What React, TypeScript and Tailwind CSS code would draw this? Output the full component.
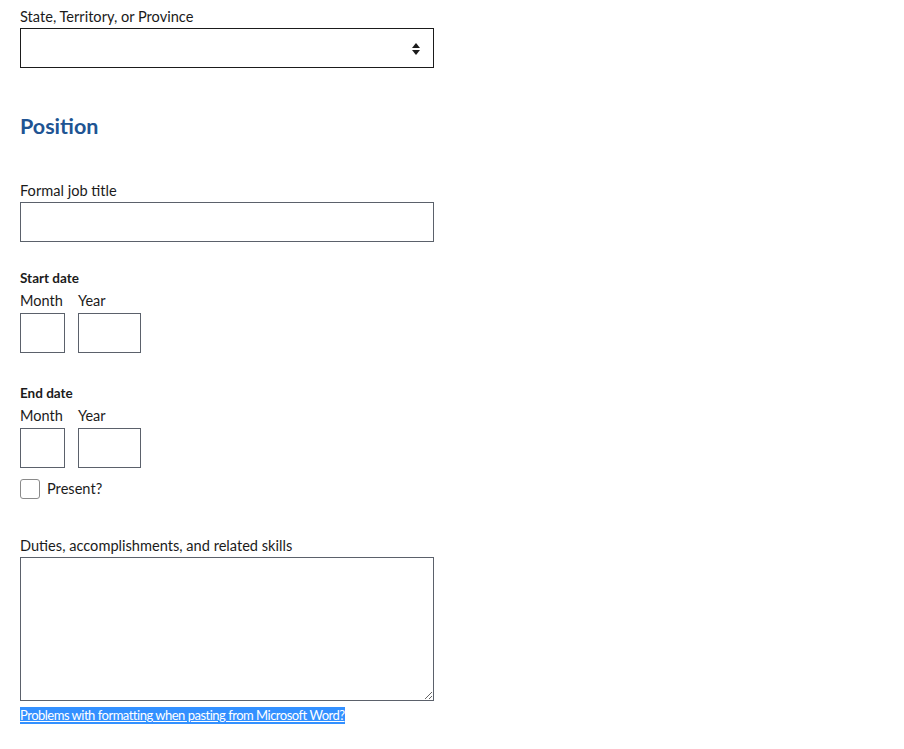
import React from "react";

const font = { fontFamily: '"Lato", "Open Sans", sans-serif' };

function SelectArrows() {
  return (
    <svg width="10" height="14" viewBox="0 0 10 14" className="absolute right-[12px] top-[13px]">
      <path d="M5 1 L9 6 H1 Z" fill="#1b1b1b" />
      <path d="M1 8 H9 L5 13 Z" fill="#1b1b1b" />
    </svg>
  );
}

function DateGroup({ title, top }: { title: string; top: string }) {
  return (
    <div className={top}>
      <div className="text-[13.5px] font-bold leading-[18px] text-[#1b1b1b]">{title}</div>
      <div className="mt-[4px] flex gap-[13px]">
        <div className="flex flex-col">
          <span className="text-[14.5px] leading-[20px] text-[#1b1b1b]">Month</span>
          <input className="mt-[2px] h-[40px] w-[45px] border border-[#5b616b] outline-none" />
        </div>
        <div className="flex flex-col">
          <span className="text-[14.5px] leading-[20px] text-[#1b1b1b]">Year</span>
          <input className="mt-[2px] h-[40px] w-[63px] border border-[#5b616b] outline-none" />
        </div>
      </div>
    </div>
  );
}

export default function App() {
  return (
    <div className="min-h-screen bg-white pl-[20px] pt-[7px]" style={font}>
      <div className="flex w-[414px] flex-col">
        <label className="text-[14.6px] leading-[20px] text-[#1b1b1b]">State, Territory, or Province</label>
        <div className="relative mt-[1px] h-[40px] w-full border border-[#1b1b1b]">
          <SelectArrows />
        </div>

        <h2 className="mt-[44px] text-[21.5px] font-bold leading-[28px] text-[#205493]">Position</h2>

        <label className="mt-[41px] text-[14.6px] leading-[20px] text-[#1b1b1b]">Formal job title</label>
        <input className="mt-[1px] h-[40px] w-full border border-[#5b616b] outline-none" />

        <DateGroup title="Start date" top="mt-[27px]" />
        <DateGroup title="End date" top="mt-[31px]" />

        <label className="mt-[11px] flex items-center gap-[7px]">
          <span className="h-[20px] w-[20px] rounded-[3px] border border-[#8a8a8a] bg-white" />
          <span className="text-[14.6px] leading-[20px] text-[#1b1b1b]">Present?</span>
        </label>

        <label className="mt-[37px] text-[14.6px] leading-[20px] text-[#1b1b1b]">
          Duties, accomplishments, and related skills
        </label>
        <textarea className="mt-[1px] block h-[144px] w-full border border-[#5b616b] outline-none" />

        <div className="mt-[4px] leading-[18px]">
          <span className="bg-[#3390ff] pb-[1px] text-[13px] leading-[18px] tracking-[-0.5px] text-white underline">
            Problems with formatting when pasting from Microsoft Word?
          </span>
        </div>
      </div>
    </div>
  );
}
